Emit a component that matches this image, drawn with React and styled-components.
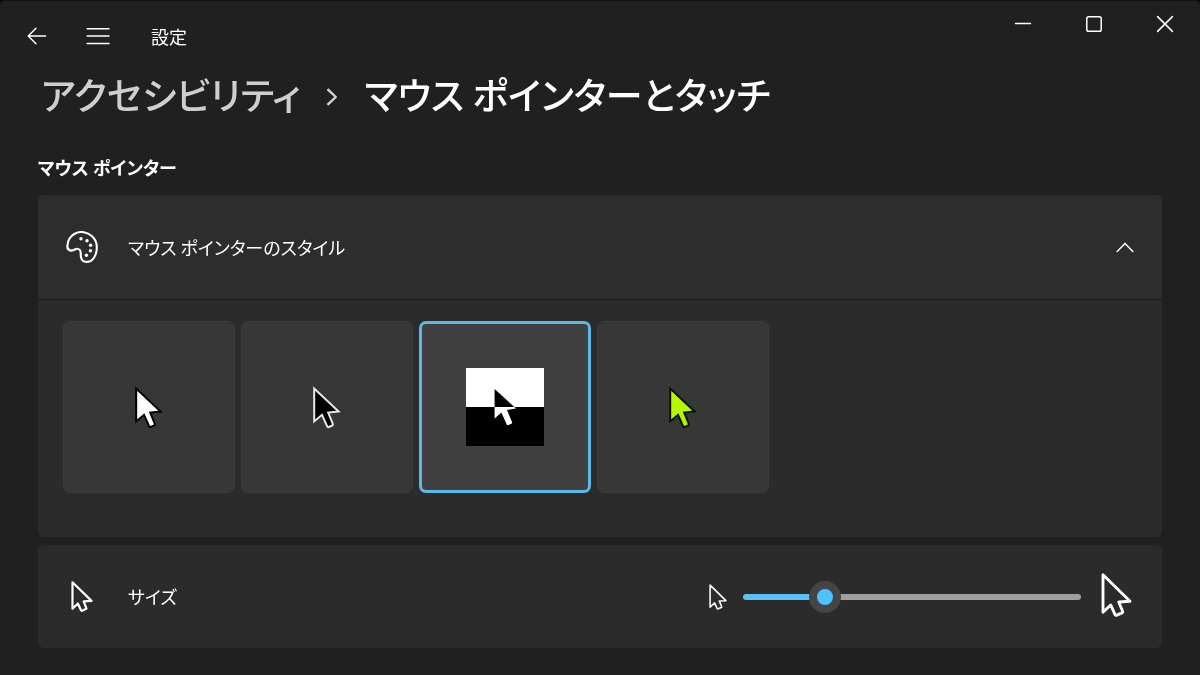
import React, { useState } from 'react';
import styled, { createGlobalStyle } from 'styled-components';

const POINTER_STYLES = [
  { id: 'white', label: '白', fill: '#ffffff', stroke: '#000000' },
  { id: 'black', label: '黒', fill: '#000000', stroke: '#e8e8e8' },
  { id: 'inverted', label: '反転' },
  { id: 'custom', label: 'カスタム', fill: '#b5f700', stroke: '#0c1400' },
];

const MIN_SIZE = 1;
const MAX_SIZE = 15;

const BackIcon = () => (
  <svg width="20" height="18" viewBox="0 0 20 18" fill="none" stroke="#fff" strokeWidth="1.4" strokeLinecap="round" strokeLinejoin="round">
    <path d="M18.6 9H1.2M9 1.2L1.2 9L9 16.8" />
  </svg>
);

const MenuIcon = () => (
  <svg width="24" height="18" viewBox="0 0 24 18" stroke="#fff" strokeWidth="1.5" strokeLinecap="round">
    <path d="M1.2 1.7H23M1.2 9.1H23M1.2 16.4H23" />
  </svg>
);

const MinimizeIcon = () => (
  <svg width="18" height="18" viewBox="0 0 18 18" stroke="#fff" strokeWidth="1.4" strokeLinecap="round">
    <path d="M1.5 8.5H16.5" />
  </svg>
);

const MaximizeIcon = () => (
  <svg width="18" height="18" viewBox="0 0 18 18" fill="none" stroke="#fff" strokeWidth="1.5">
    <rect x="1.8" y="1.8" width="14.4" height="14.4" rx="1.8" />
  </svg>
);

const CloseIcon = () => (
  <svg width="18" height="18" viewBox="0 0 18 18" stroke="#fff" strokeWidth="1.5" strokeLinecap="round">
    <path d="M1.6 1.6L16.4 16.4M16.4 1.6L1.6 16.4" />
  </svg>
);

const CrumbChevron = () => (
  <svg width="12" height="18" viewBox="0 0 12 18" fill="none" stroke="#d4d4d4" strokeWidth="2.4" strokeLinejoin="round">
    <path d="M1.5 1.2L9.8 9L1.5 16.8" />
  </svg>
);

const CollapseIcon = () => (
  <svg width="18" height="11" viewBox="0 0 18 11" fill="none" stroke="#fff" strokeWidth="1.5" strokeLinecap="round" strokeLinejoin="round">
    <path d="M1.2 9.4L9 1.4L16.8 9.4" />
  </svg>
);

const PaletteIcon = () => (
  <svg width="32" height="32" viewBox="0 0 32 32" fill="none" stroke="#fff" strokeWidth="2.1" strokeLinejoin="round">
    <path d="M1.4 14.6C1.8 9 5.2 4.2 9.6 2.2C14.6 0 21.2 0.9 25.8 5C30 8.8 31.6 14.6 30.4 20.6C29.2 26.6 25.6 30.9 20.6 30.9C17.6 30.9 15.4 28.8 14.9 25.8C14.6 24 14.9 22.2 14.5 20.4C14 18.2 11.6 17.2 9.4 18.2C7.6 19 6.6 20 4.6 19.6C2.2 19.2 1.2 17 1.4 14.6Z" />
    <g fill="#fff" stroke="none">
      <circle cx="15" cy="7.8" r="1.7" />
      <circle cx="21" cy="9.8" r="1.7" />
      <circle cx="24.6" cy="14.2" r="1.7" />
      <circle cx="24.4" cy="19.8" r="1.7" />
      <circle cx="20.4" cy="24.2" r="1.7" />
    </g>
  </svg>
);

const PointerOutline = ({ width, height, weight }) => (
  <svg width={width} height={height} viewBox="0 0 30 43" fill="none" stroke="#fff" strokeWidth={weight} strokeLinejoin="round">
    <path d="M1.8 1.8V38.4L9.3 31.2L13.6 40.6Q14.2 41.7 15.3 41.2L20.4 39Q21.5 38.5 21 37.4L17.2 28.3L28.2 27.6Z" />
  </svg>
);

const PointerPreview = ({ fill, stroke }) => (
  <svg width="28" height="43" viewBox="0 0 28 43" fill={fill} stroke={stroke} strokeWidth="2">
    <path d="M1.2 2.6V35.4L9 28.8L14.2 40.4Q14.7 41.5 15.8 41L19.2 39.5Q20.3 39 19.8 37.9L15.2 26.6L25.6 25.4Z" />
  </svg>
);

const InvertedPreview = () => (
  <svg width="78" height="78" viewBox="0 0 78 78">
    <rect width="78" height="78" fill="#000" />
    <rect width="78" height="39" fill="#fff" />
    <InvertingPath d="M28.6 21V50.6L35.4 44.4L40.6 56.2Q41.1 57.5 42.4 57L45.4 55.7Q46.5 55.1 46 54L41 42L50 40.6Z" />
  </svg>
);

function App() {
  const [expanded, setExpanded] = useState(true);
  const [pointer, setPointer] = useState('inverted');
  const [size, setSize] = useState(4);
  const fraction = (size - MIN_SIZE) / (MAX_SIZE - MIN_SIZE);

  return (
    <Window>
      <GlobalStyle />
      <TitleBar>
        <NavButtons>
          <NavButton type="button" aria-label="戻る">
            <BackIcon />
          </NavButton>
          <NavButton type="button" aria-label="メニュー">
            <MenuIcon />
          </NavButton>
          <AppName>設定</AppName>
        </NavButtons>
        <WindowControls>
          <WindowButton type="button" aria-label="最小化">
            <MinimizeIcon />
          </WindowButton>
          <WindowButton type="button" aria-label="最大化">
            <MaximizeIcon />
          </WindowButton>
          <WindowButton type="button" aria-label="閉じる">
            <CloseIcon />
          </WindowButton>
        </WindowControls>
      </TitleBar>

      <Content>
        <Breadcrumb>
          <CrumbLink href="#accessibility">アクセシビリティ</CrumbLink>
          <CrumbChevron />
          <PageTitle>マウス ポインターとタッチ</PageTitle>
        </Breadcrumb>

        <SectionTitle>マウス ポインター</SectionTitle>

        <Cards>
          <Card>
            <ExpanderHeader type="button" aria-expanded={expanded} onClick={() => setExpanded(!expanded)}>
              <IconSlot>
                <PaletteIcon />
              </IconSlot>
              <RowLabel>マウス ポインターのスタイル</RowLabel>
              <CollapseIcon />
            </ExpanderHeader>
            {expanded && (
              <StyleList>
                {POINTER_STYLES.map(item => (
                  <StyleTile key={item.id} $selected={pointer === item.id}>
                    <HiddenRadio
                      type="radio"
                      name="pointer-style"
                      aria-label={item.label}
                      checked={pointer === item.id}
                      onChange={() => setPointer(item.id)}
                    />
                    {item.fill ? <PointerPreview fill={item.fill} stroke={item.stroke} /> : <InvertedPreview />}
                  </StyleTile>
                ))}
              </StyleList>
            )}
          </Card>

          <Card>
            <SizeRow>
              <IconSlot>
                <PointerOutline width={22} height={31} weight={3} />
              </IconSlot>
              <RowLabel as="label" htmlFor="pointer-size">
                サイズ
              </RowLabel>
              <SliderGroup>
                <PointerOutline width={18} height={26} weight={2.6} />
                <Slider
                  id="pointer-size"
                  type="range"
                  min={MIN_SIZE}
                  max={MAX_SIZE}
                  value={size}
                  onChange={e => setSize(Number(e.target.value))}
                  style={{ '--fill': `${fraction * 100}%` }}
                />
                <LargePointer>
                  <PointerOutline width={31} height={44} weight={2.8} />
                </LargePointer>
              </SliderGroup>
            </SizeRow>
          </Card>
        </Cards>
      </Content>
    </Window>
  );
}

const GlobalStyle = createGlobalStyle`
  * {
    box-sizing: border-box;
  }

  body {
    margin: 0;
    background: #0c0c0c;
    color: #ffffff;
    font-family: 'Noto Sans CJK JP', sans-serif;
    font-feature-settings: 'palt';
  }

  button {
    padding: 0;
    border: none;
    background: none;
    color: inherit;
    font: inherit;
    font-feature-settings: inherit;
  }

  svg {
    display: block;
    flex-shrink: 0;
  }
`;

const Window = styled.div`
  min-height: 100vh;
  border-top: 1px solid #121212;
  border-radius: 5px 5px 0 0;
  background: #202020;
`;

const TitleBar = styled.header`
  display: flex;
  justify-content: space-between;
  align-items: flex-start;
`;

const NavButtons = styled.div`
  display: flex;
  align-items: center;
  height: 70px;
  padding-left: 6px;
`;

const NavButton = styled.button`
  display: flex;
  justify-content: center;
  align-items: center;
  width: 61px;
  height: 48px;
`;

const AppName = styled.span`
  margin-left: 23px;
  font-size: 18px;
  line-height: 24px;
`;

const WindowControls = styled.div`
  display: flex;
`;

const WindowButton = styled.button`
  display: flex;
  justify-content: center;
  align-items: center;
  width: 71px;
  height: 46px;
`;

const Content = styled.main`
  padding: 0 38px 24px;
`;

const Breadcrumb = styled.nav`
  display: flex;
  align-items: center;
  gap: 26px;
  height: 52px;
  padding-left: 3px;
  font-size: 37px;
  line-height: 46px;
`;

const CrumbLink = styled.a`
  padding-bottom: 6px;
  color: #cfcfcf;
  font-weight: 500;
  text-decoration: none;
`;

const PageTitle = styled.h1`
  margin: 0;
  padding-bottom: 6px;
  font-size: 37px;
  font-weight: 500;
`;

const SectionTitle = styled.h2`
  margin: 30px 0 14px;
  font-size: 18px;
  font-weight: 700;
  line-height: 28px;
`;

const Cards = styled.div`
  display: flex;
  flex-direction: column;
  gap: 8px;
`;

const Card = styled.section`
  overflow: hidden;
  border-radius: 6px;
  background: #2b2b2b;
`;

const ExpanderHeader = styled.button`
  display: flex;
  align-items: center;
  width: 100%;
  height: 104px;
  padding: 0 28px 0 25px;
  background: #2d2d2d;
  text-align: left;
`;

const IconSlot = styled.span`
  display: flex;
  justify-content: center;
  width: 38px;
`;

const RowLabel = styled.span`
  flex: 1;
  margin-left: 27px;
  padding-bottom: 1px;
  font-size: 18px;
  line-height: 32px;
`;

const StyleList = styled.div`
  display: flex;
  flex-wrap: wrap;
  gap: 6px;
  padding: 21px 25px 44px;
  border-top: 1px solid #1c1c1c;
`;

const StyleTile = styled.label`
  display: flex;
  justify-content: center;
  align-items: center;
  position: relative;
  width: 172px;
  height: 172px;
  border: ${props => (props.$selected ? '3px solid #5bb9e8' : '1px solid #3c3c3c')};
  border-radius: 7px;
  background: ${props => (props.$selected ? '#404040' : '#373737')};
`;

const HiddenRadio = styled.input`
  position: absolute;
  inset: 0;
  width: 100%;
  height: 100%;
  margin: 0;
  opacity: 0;
`;

const InvertingPath = styled.path`
  fill: #ffffff;
  mix-blend-mode: difference;
`;

const SizeRow = styled.div`
  display: flex;
  align-items: center;
  height: 103px;
  padding: 0 30px 0 25px;
`;

const SliderGroup = styled.div`
  display: flex;
  align-items: center;
  gap: 16px;
`;

const LargePointer = styled.span`
  padding-bottom: 4px;
`;

const Slider = styled.input`
  appearance: none;
  width: 338px;
  height: 32px;
  margin: 0 4px 0 0;
  background: transparent;

  &::-webkit-slider-runnable-track {
    height: 6px;
    border-radius: 3px;
    background: linear-gradient(to right, #5bc0f5 var(--fill), #9f9d9d var(--fill));
  }

  &::-webkit-slider-thumb {
    appearance: none;
    width: 32px;
    height: 32px;
    margin-top: -13px;
    border: 8px solid #454545;
    border-radius: 50%;
    background: #4cc2ff;
  }
`;

export default App;
